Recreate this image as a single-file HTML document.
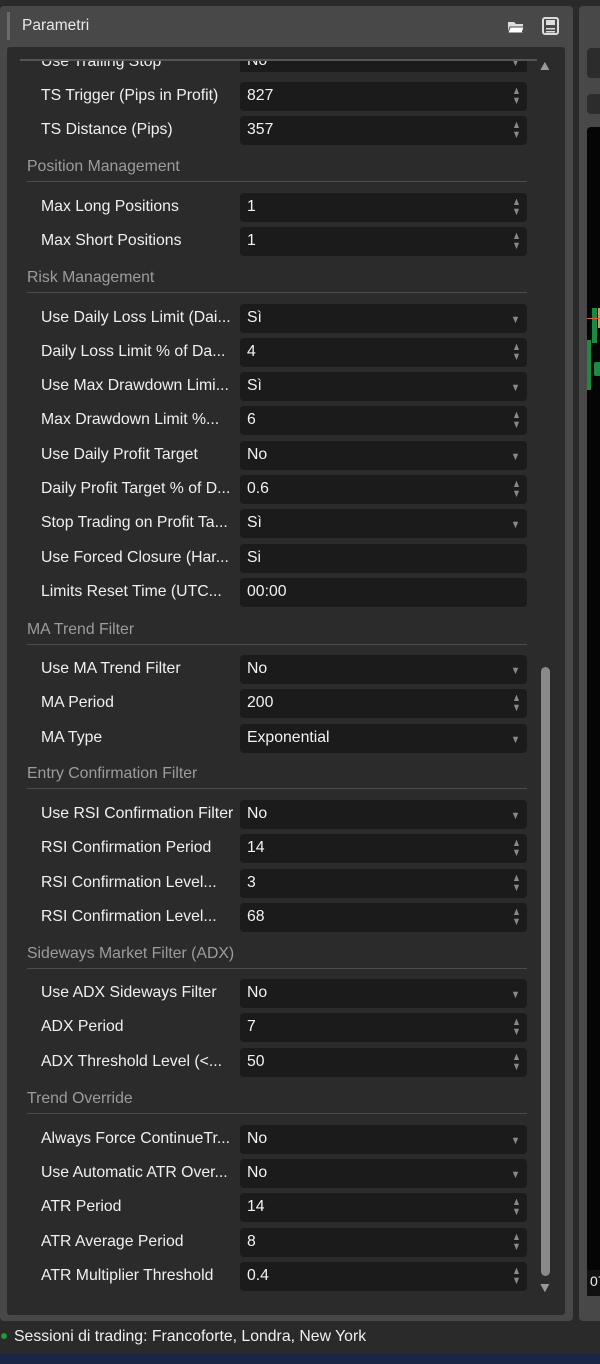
<!DOCTYPE html>
<html><head><meta charset="utf-8"><style>
*{margin:0;padding:0;box-sizing:border-box}
body{width:600px;height:1364px;background:#2a2a2a;font-family:"Liberation Sans",Arial,sans-serif;position:relative;overflow:hidden}
.frame{position:absolute;left:0;top:6px;width:573px;height:1315px;background:#484848;border-radius:4px}
.grip{position:absolute;left:7px;top:12px;width:3px;height:28px;background:#6a6a6a}
.title{position:absolute;left:22px;top:17px;color:#e8e8e8;font-size:15.5px}
.inner{position:absolute;left:7px;top:47px;width:558px;height:1268px;background:#2b2b2b;border-radius:3px;overflow:hidden}
.topline{position:absolute;left:20px;top:59px;width:517px;height:2px;background:#555}
.lbl{position:absolute;left:41px;color:#f0f0f0;font-size:15.8px;white-space:nowrap;line-height:18px}
.box{position:absolute;left:240px;width:287px;height:29px;background:#1b1b1b;border-radius:4px;color:#f2f2f2;font-size:15.8px;line-height:18px;padding:5px 0 0 7px}
.box .a{position:absolute;right:5px;top:4px;color:#8a8a8a;font-size:11px;line-height:10px;text-align:center;transform:scaleX(0.8)}
.box .d{position:absolute;right:6px;top:7px;color:#8a8a8a;font-size:11px;transform:scaleX(0.85)}
.sec{position:absolute;left:27px;color:#9c9c9c;font-size:15.8px;line-height:18px}
.hr{position:absolute;left:27px;width:500px;height:1px;background:#4c4c4c}
.right{position:absolute;left:579px;top:6px;width:30px;height:1315px;background:#484848;border-radius:4px}
</style></head><body>
<div class="frame"></div>
<div class="grip"></div>
<div class="title">Parametri</div>
<svg style="position:absolute;left:507px;top:19px" width="18" height="16"><path d="M1 3h6l2 2h7v9H1z" fill="#ddd"/><path d="M3 8h14l-2 6H1z" fill="#fff" stroke="#484848" stroke-width="1"/></svg>
<svg style="position:absolute;left:542px;top:17px" width="17" height="18"><rect x="1" y="1" width="15" height="16" rx="2" fill="none" stroke="#ddd" stroke-width="2"/><rect x="4" y="3" width="9" height="5" fill="#ddd"/><rect x="4" y="11" width="9" height="1.5" fill="#ddd"/><rect x="4" y="14" width="9" height="1.5" fill="#ddd"/></svg>
<div class="right"></div>
<div style="position:absolute;left:587px;top:48px;width:20px;height:30px;background:#2c2c2c;border-radius:4px"></div>
<div style="position:absolute;left:587px;top:94px;width:20px;height:20px;background:#2c2c2c;border-radius:4px"></div>
<div style="position:absolute;left:587px;top:127px;width:20px;height:1162px;background:#050505;border-radius:4px 0 0 4px"></div>
<div style="position:absolute;left:587px;top:340px;width:4px;height:50px;background:#1c8a40"></div>
<div style="position:absolute;left:592px;top:308px;width:5px;height:35px;background:#1c8a40"></div>
<div style="position:absolute;left:598px;top:308px;width:3px;height:20px;background:#e08a70"></div>
<div style="position:absolute;left:587px;top:318px;width:13px;height:1px;background:#e05a30"></div>
<div style="position:absolute;left:594px;top:362px;width:8px;height:14px;background:#1c8a40;border-radius:2px"></div>
<div style="position:absolute;left:587px;top:1270px;width:20px;height:26px;background:#111;color:#eee;font-size:14px;padding:3px 0 0 3px">07</div>
<div class="inner"></div>
<div style="position:absolute;left:538px;top:57px;color:#999;font-size:14px;transform:scaleX(1.1)">▲</div>
<div style="position:absolute;left:538px;top:1279px;color:#999;font-size:14px;transform:scaleX(1.1)">▼</div>
<div style="position:absolute;left:541px;top:667px;width:9px;height:609px;background:#8a8a8a;border-radius:5px"></div>

<div style="position:absolute;left:20px;top:60px;width:517px;height:12px;overflow:hidden">
<div class="lbl" style="top:-7px;left:21px">Use Trailing Stop</div>
<div class="box" style="top:-13px;left:220px">No<span class="d">▼</span></div></div>
<div class="topline"></div>

<div class="lbl" style="top:87px">TS Trigger (Pips in Profit)</div><div class="box" style="top:82px">827<span class="a">▲<br>▼</span></div>
<div class="lbl" style="top:121px">TS Distance (Pips)</div><div class="box" style="top:116px">357<span class="a">▲<br>▼</span></div>

<div class="sec" style="top:158px">Position Management</div><div class="hr" style="top:181px"></div>
<div class="lbl" style="top:198px">Max Long Positions</div><div class="box" style="top:193px">1<span class="a">▲<br>▼</span></div>
<div class="lbl" style="top:232px">Max Short Positions</div><div class="box" style="top:227px">1<span class="a">▲<br>▼</span></div>

<div class="sec" style="top:269px">Risk Management</div><div class="hr" style="top:292px"></div>
<div class="lbl" style="top:309px">Use Daily Loss Limit (Dai...</div><div class="box" style="top:304px">Sì<span class="d">▼</span></div>
<div class="lbl" style="top:343px">Daily Loss Limit % of Da...</div><div class="box" style="top:338px">4<span class="a">▲<br>▼</span></div>
<div class="lbl" style="top:377px">Use Max Drawdown Limi...</div><div class="box" style="top:372px">Sì<span class="d">▼</span></div>
<div class="lbl" style="top:411px">Max Drawdown Limit %...</div><div class="box" style="top:406px">6<span class="a">▲<br>▼</span></div>
<div class="lbl" style="top:446px">Use Daily Profit Target</div><div class="box" style="top:441px">No<span class="d">▼</span></div>
<div class="lbl" style="top:480px">Daily Profit Target % of D...</div><div class="box" style="top:475px">0.6<span class="a">▲<br>▼</span></div>
<div class="lbl" style="top:514px">Stop Trading on Profit Ta...</div><div class="box" style="top:509px">Sì<span class="d">▼</span></div>
<div class="lbl" style="top:549px">Use Forced Closure (Har...</div><div class="box" style="top:544px">Si</div>
<div class="lbl" style="top:583px">Limits Reset Time (UTC...</div><div class="box" style="top:578px">00:00</div>

<div class="sec" style="top:621px">MA Trend Filter</div><div class="hr" style="top:644px"></div>
<div class="lbl" style="top:660px">Use MA Trend Filter</div><div class="box" style="top:655px">No<span class="d">▼</span></div>
<div class="lbl" style="top:694px">MA Period</div><div class="box" style="top:689px">200<span class="a">▲<br>▼</span></div>
<div class="lbl" style="top:729px">MA Type</div><div class="box" style="top:724px">Exponential<span class="d">▼</span></div>

<div class="sec" style="top:765px">Entry Confirmation Filter</div><div class="hr" style="top:788px"></div>
<div class="lbl" style="top:805px">Use RSI Confirmation Filter</div><div class="box" style="top:800px">No<span class="d">▼</span></div>
<div class="lbl" style="top:839px">RSI Confirmation Period</div><div class="box" style="top:834px">14<span class="a">▲<br>▼</span></div>
<div class="lbl" style="top:874px">RSI Confirmation Level...</div><div class="box" style="top:869px">3<span class="a">▲<br>▼</span></div>
<div class="lbl" style="top:908px">RSI Confirmation Level...</div><div class="box" style="top:903px">68<span class="a">▲<br>▼</span></div>

<div class="sec" style="top:945px">Sideways Market Filter (ADX)</div><div class="hr" style="top:968px"></div>
<div class="lbl" style="top:984px">Use ADX Sideways Filter</div><div class="box" style="top:979px">No<span class="d">▼</span></div>
<div class="lbl" style="top:1018px">ADX Period</div><div class="box" style="top:1013px">7<span class="a">▲<br>▼</span></div>
<div class="lbl" style="top:1053px">ADX Threshold Level (&lt;...</div><div class="box" style="top:1048px">50<span class="a">▲<br>▼</span></div>

<div class="sec" style="top:1090px">Trend Override</div><div class="hr" style="top:1113px"></div>
<div class="lbl" style="top:1130px">Always Force ContinueTr...</div><div class="box" style="top:1125px">No<span class="d">▼</span></div>
<div class="lbl" style="top:1164px">Use Automatic ATR Over...</div><div class="box" style="top:1159px">No<span class="d">▼</span></div>
<div class="lbl" style="top:1198px">ATR Period</div><div class="box" style="top:1193px">14<span class="a">▲<br>▼</span></div>
<div class="lbl" style="top:1233px">ATR Average Period</div><div class="box" style="top:1228px">8<span class="a">▲<br>▼</span></div>
<div class="lbl" style="top:1267px">ATR Multiplier Threshold</div><div class="box" style="top:1262px">0.4<span class="a">▲<br>▼</span></div>

<div style="position:absolute;left:1px;top:1333px;width:6px;height:6px;border-radius:3px;background:#1a9a3a"></div>
<div style="position:absolute;left:14px;top:1328px;color:#f0f0f0;font-size:15.8px;line-height:18px">Sessioni di trading: Francoforte, Londra, New York</div>
<div style="position:absolute;left:0;top:1354px;width:600px;height:10px;background:#1b2545"></div>
</body></html>
